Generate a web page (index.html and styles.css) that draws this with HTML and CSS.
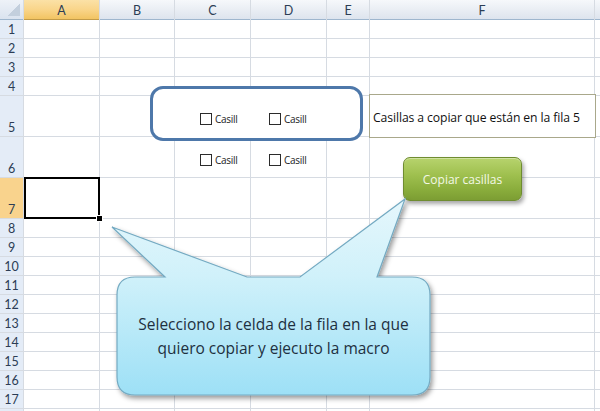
FILE: index.html
```html
<!DOCTYPE html>
<html lang="es">
<head>
<meta charset="utf-8">
<title>Copiar casillas</title>
<link rel="stylesheet" href="styles.css">
</head>
<body>
<div class="page">
  <div class="sheet">
    <div class="corner"></div>
    <div class="ch sel">A</div><div class="ch">B</div><div class="ch">C</div><div class="ch">D</div><div class="ch">E</div><div class="ch">F</div><div class="ch"></div>

    <div class="rh">1</div><div class="c"></div><div class="c"></div><div class="c"></div><div class="c"></div><div class="c"></div><div class="c"></div><div class="c"></div>
    <div class="rh">2</div><div class="c"></div><div class="c"></div><div class="c"></div><div class="c"></div><div class="c"></div><div class="c"></div><div class="c"></div>
    <div class="rh">3</div><div class="c"></div><div class="c"></div><div class="c"></div><div class="c"></div><div class="c"></div><div class="c"></div><div class="c"></div>
    <div class="rh">4</div><div class="c"></div><div class="c"></div><div class="c"></div><div class="c"></div><div class="c"></div><div class="c"></div><div class="c"></div>
    <div class="rh">5</div><div class="c"></div><div class="c"></div><div class="c"></div><div class="c"></div><div class="c"></div><div class="c"></div><div class="c"></div>
    <div class="rh">6</div><div class="c"></div><div class="c"></div><div class="c"></div><div class="c"></div><div class="c"></div><div class="c"></div><div class="c"></div>
    <div class="rh sel">7</div><div class="c"></div><div class="c"></div><div class="c"></div><div class="c"></div><div class="c"></div><div class="c"></div><div class="c"></div>
    <div class="rh">8</div><div class="c"></div><div class="c"></div><div class="c"></div><div class="c"></div><div class="c"></div><div class="c"></div><div class="c"></div>
    <div class="rh">9</div><div class="c"></div><div class="c"></div><div class="c"></div><div class="c"></div><div class="c"></div><div class="c"></div><div class="c"></div>
    <div class="rh">10</div><div class="c"></div><div class="c"></div><div class="c"></div><div class="c"></div><div class="c"></div><div class="c"></div><div class="c"></div>
    <div class="rh">11</div><div class="c"></div><div class="c"></div><div class="c"></div><div class="c"></div><div class="c"></div><div class="c"></div><div class="c"></div>
    <div class="rh">12</div><div class="c"></div><div class="c"></div><div class="c"></div><div class="c"></div><div class="c"></div><div class="c"></div><div class="c"></div>
    <div class="rh">13</div><div class="c"></div><div class="c"></div><div class="c"></div><div class="c"></div><div class="c"></div><div class="c"></div><div class="c"></div>
    <div class="rh">14</div><div class="c"></div><div class="c"></div><div class="c"></div><div class="c"></div><div class="c"></div><div class="c"></div><div class="c"></div>
    <div class="rh">15</div><div class="c"></div><div class="c"></div><div class="c"></div><div class="c"></div><div class="c"></div><div class="c"></div><div class="c"></div>
    <div class="rh">16</div><div class="c"></div><div class="c"></div><div class="c"></div><div class="c"></div><div class="c"></div><div class="c"></div><div class="c"></div>
    <div class="rh">17</div><div class="c"></div><div class="c"></div><div class="c"></div><div class="c"></div><div class="c"></div><div class="c"></div><div class="c"></div>
    <div class="rh"></div><div class="c"></div><div class="c"></div><div class="c"></div><div class="c"></div><div class="c"></div><div class="c"></div><div class="c"></div>
  </div>

  <div class="selection"><span class="handle"></span></div>

  <div class="frame"></div>
  <label class="chk r5 k1"><span class="box"></span>Casill</label>
  <label class="chk r5 k2"><span class="box"></span>Casill</label>
  <label class="chk r6 k1"><span class="box"></span>Casill</label>
  <label class="chk r6 k2"><span class="box"></span>Casill</label>

  <div class="textbox">Casillas a copiar que están en la fila 5</div>

  <button class="btn">Copiar casillas</button>

  <svg class="callout" width="600" height="411" viewBox="0 0 600 411" aria-hidden="true">
    <defs>
      <linearGradient id="cg" x1="0" y1="197" x2="0" y2="395" gradientUnits="userSpaceOnUse">
        <stop offset="0" stop-color="#e6f7fc"/>
        <stop offset="0.4" stop-color="#d0f1fa"/>
        <stop offset="1" stop-color="#9de0f6"/>
      </linearGradient>
      <filter id="sh" x="-10%" y="-10%" width="130%" height="130%">
        <feDropShadow dx="2" dy="3" stdDeviation="2.4" flood-color="#000" flood-opacity="0.4"/>
      </filter>
    </defs>
    <path d="M135,277 L165,277 L112,227 L247,277 L300,277 L405,199 L377,277 L412,277 Q430,277 430,295 L430,377 Q430,395 412,395 L135,395 Q117,395 117,377 L117,295 Q117,277 135,277 Z"
      fill="url(#cg)" stroke="#74aac2" stroke-width="1.2" filter="url(#sh)"/>
  </svg>
  <div class="callout-text">Selecciono la celda de la fila en la que<br>quiero copiar y ejecuto la macro</div>
</div>
</body>
</html>
```

FILE: styles.css
```css
html, body {
  margin: 0;
  padding: 0;
  background: #ffffff;
}
body {
  width: 600px;
  height: 411px;
  overflow: hidden;
  font-family: Lato, "Open Sans", sans-serif;
}
.page {
  position: relative;
  width: 600px;
  height: 411px;
  overflow: hidden;
}
.sheet {
  display: grid;
  grid-template-columns: 23px 75px 74px 75px 75px 42px 224px 1fr;
  grid-template-rows: 19px repeat(4, 18px) 40px 40px 40px repeat(11, 18px);
  gap: 1px;
  background: #d6dbe2;
  width: 600px;
}
.c {
  background: #ffffff;
}
.corner {
  position: relative;
  background: linear-gradient(#eef2f8, #dae3ef);
  border-bottom: 1px solid #9eb6ce;
  margin-bottom: -1px;
}
.corner::after {
  content: "";
  position: absolute;
  right: 3px;
  bottom: 3px;
  width: 12px;
  height: 12px;
  background: linear-gradient(to bottom right, transparent 50%, #c3cfdd 50%);
}
.ch {
  display: flex;
  align-items: center;
  justify-content: center;
  background: linear-gradient(#f6f8fb 0%, #eaeef4 50%, #dde4ee 100%);
  border-bottom: 1px solid #9eb6ce;
  margin-bottom: -1px;
  font-size: 12.5px;
  color: #2c3d55;
  padding-top: 1px;
}
.ch.sel {
  background: linear-gradient(#fbe1a6 0%, #f9d58a 50%, #f2c462 100%);
  border-bottom-color: #c29b48;
}
.rh {
  display: flex;
  align-items: flex-end;
  justify-content: center;
  background: #e4ecf7;
  font-size: 12.5px;
  line-height: 14px;
  color: #2c3d55;
  padding-bottom: 1px;
}
.rh.sel {
  background: #f9d38d;
}

.selection {
  position: absolute;
  left: 24px;
  top: 177px;
  width: 72px;
  height: 38px;
  border: 2px solid #000;
}
.handle {
  position: absolute;
  right: -5px;
  bottom: -5px;
  width: 5px;
  height: 5px;
  background: #000;
  border: 1px solid #fff;
}

.frame {
  position: absolute;
  left: 150px;
  top: 86px;
  width: 207px;
  height: 49px;
  border: 3px solid #4e78aa;
  border-radius: 13px;
  background: #ffffff;
}
.chk {
  position: absolute;
  display: flex;
  align-items: center;
  gap: 3px;
  font-family: "Open Sans", sans-serif;
  font-size: 10px;
  color: #222;
  letter-spacing: -0.3px;
}
.chk .box {
  width: 10px;
  height: 10px;
  border: 1px solid #2b2b2b;
  background: #fff;
}
.chk.r5 { top: 112px; }
.chk.r6 { top: 153px; }
.chk.k1 { left: 200px; }
.chk.k2 { left: 269px; }

.textbox {
  position: absolute;
  left: 369px;
  top: 94px;
  width: 222px;
  height: 40px;
  border: 1px solid #a9a88b;
  background: #fff;
  padding-left: 3px;
  display: flex;
  align-items: center;
  padding-top: 2px;
  box-sizing: content-box;
  font-family: "Open Sans", sans-serif;
  font-size: 12.2px;
  letter-spacing: -0.1px;
  color: #111;
  white-space: nowrap;
}

.btn {
  position: absolute;
  left: 403px;
  top: 157px;
  width: 119px;
  height: 44px;
  border: 1px solid #6f8c30;
  border-radius: 7px;
  background: linear-gradient(#b7d36d 0%, #9fc04f 40%, #8aad3c 75%, #7c9d33 100%);
  box-shadow: 2px 3px 4px rgba(0, 0, 0, 0.35), inset 0 1px 0 rgba(255, 255, 255, 0.35);
  color: #f3f8e6;
  font-family: "Open Sans", sans-serif;
  font-size: 12px;
  padding: 0;
}

.callout {
  position: absolute;
  left: 0;
  top: 0;
  pointer-events: none;
}
.callout-text {
  position: absolute;
  left: 117px;
  top: 277px;
  width: 313px;
  height: 118px;
  display: flex;
  align-items: center;
  justify-content: center;
  text-align: center;
  font-family: "Open Sans", sans-serif;
  font-size: 15.5px;
  line-height: 24px;
  color: #1e3040;
}
```
